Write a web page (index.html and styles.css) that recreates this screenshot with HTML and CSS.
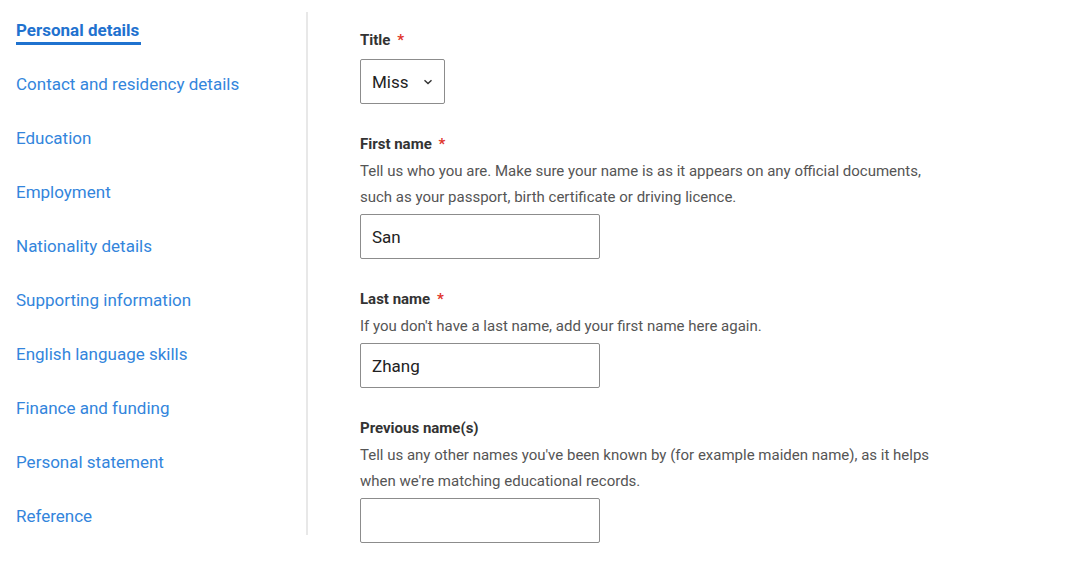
FILE: index.html
```html
<!DOCTYPE html>
<html lang="en">
<head>
<meta charset="utf-8">
<title>Personal details</title>
<link rel="stylesheet" href="styles.css">
</head>
<body>
<div class="page">
  <nav class="sidebar">
    <a class="nav-link active" href="#">Personal details</a>
    <a class="nav-link" href="#">Contact and residency details</a>
    <a class="nav-link" href="#">Education</a>
    <a class="nav-link" href="#">Employment</a>
    <a class="nav-link" href="#">Nationality details</a>
    <a class="nav-link" href="#">Supporting information</a>
    <a class="nav-link" href="#">English language skills</a>
    <a class="nav-link" href="#">Finance and funding</a>
    <a class="nav-link" href="#">Personal statement</a>
    <a class="nav-link" href="#">Reference</a>
  </nav>
  <main class="form">
    <div class="field">
      <label class="label">Title <span class="req">*</span></label>
      <div class="select">
        <span class="select-value">Miss</span>
        <svg class="chevron" width="10" height="6" viewBox="0 0 10 6"><path d="M1.5 1.2 L5 4.6 L8.5 1.2" fill="none" stroke="#333" stroke-width="1.4"/></svg>
      </div>
    </div>
    <div class="field">
      <label class="label">First name <span class="req">*</span></label>
      <p class="hint">Tell us who you are. Make sure your name is as it appears on any official documents, such as your passport, birth certificate or driving licence.</p>
      <div class="input">San</div>
    </div>
    <div class="field">
      <label class="label">Last name <span class="req">*</span></label>
      <p class="hint">If you don't have a last name, add your first name here again.</p>
      <div class="input">Zhang</div>
    </div>
    <div class="field">
      <label class="label">Previous name(s)</label>
      <p class="hint">Tell us any other names you've been known by (for example maiden name), as it helps when we're matching educational records.</p>
      <div class="input"></div>
    </div>
  </main>
</div>
</body>
</html>
```

FILE: styles.css
```css
* { box-sizing: border-box; }
html, body { margin: 0; padding: 0; background: #fff; }
body { font-family: Roboto, "Noto Sans", sans-serif; color: #333; }

.page {
  display: flex;
  align-items: flex-start;
  padding-top: 12px;
}

.sidebar {
  width: 308px;
  flex: none;
  display: flex;
  flex-direction: column;
  align-items: flex-start;
  gap: 30px;
  padding: 6px 0 7px 16px;
  border-right: 2px solid #e8e8e8;
}

.nav-link {
  font-size: 17px;
  line-height: 24px;
  color: #3385dc;
  text-decoration: none;
}

.nav-link.active {
  font-weight: 700;
  color: #1f72cf;
  position: relative;
}

.nav-link.active::after {
  content: "";
  position: absolute;
  left: 0;
  right: -2px;
  bottom: -3px;
  height: 3px;
  background: #1f72cf;
}

.form {
  padding: 17px 0 0 52px;
  display: flex;
  flex-direction: column;
  gap: 29px;
}

.field { display: flex; flex-direction: column; align-items: flex-start; }

.label {
  font-size: 15px;
  line-height: 20px;
  padding-top: 1px;
  font-weight: 700;
  color: #333;
}

.req { color: #e0352b; margin-left: 3px; }

.label + .select { margin-top: 9px; }

.hint {
  margin: 4px 0 4px;
  font-size: 15px;
  line-height: 26px;
  color: #555;
  width: 590px;
}

.select {
  width: 85px;
  height: 45px;
  border: 1px solid #8c8c8c;
  border-radius: 2px;
  display: flex;
  align-items: center;
  justify-content: space-between;
  padding: 0 11px 0 11px;
  font-size: 17px;
  color: #222;
}

.input {
  width: 240px;
  height: 45px;
  border: 1px solid #8c8c8c;
  border-radius: 2px;
  padding: 0 11px;
  display: flex;
  align-items: center;
  font-size: 17px;
  color: #222;
}
```
